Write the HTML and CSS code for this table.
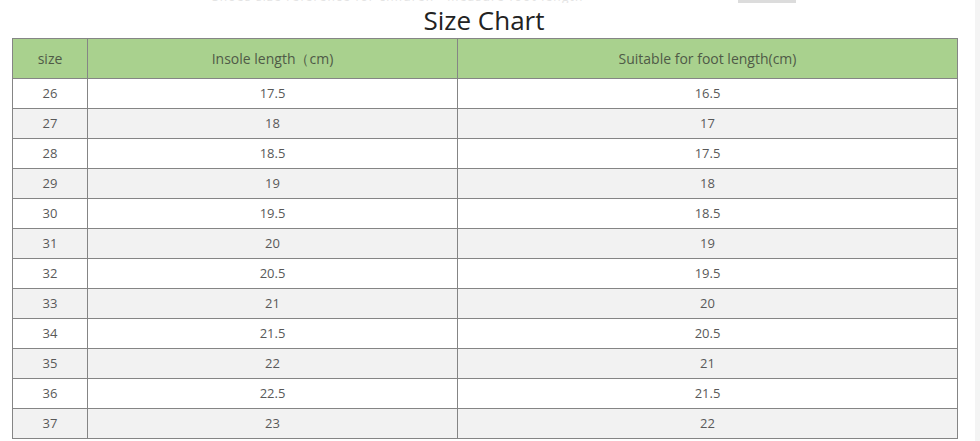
FILE: index.html
```html
<!DOCTYPE html>
<html>
<head>
<meta charset="utf-8">
<link rel="stylesheet" href="styles.css">
</head>
<body>
<div class="page">
  <div class="main">
    <div class="topstrip">
      <span class="ghost">Shoes size reference for children · measure foot length</span>
      <span class="ghostbox"></span>
    </div>
    <h1 class="title">Size Chart</h1>
    <table class="chart">
      <colgroup>
        <col class="c1"><col class="c2"><col class="c3">
      </colgroup>
      <thead>
        <tr><th>size</th><th>Insole length（cm)</th><th>Suitable for foot length(cm)</th></tr>
      </thead>
      <tbody>
        <tr><td>26</td><td>17.5</td><td>16.5</td></tr>
        <tr><td>27</td><td>18</td><td>17</td></tr>
        <tr><td>28</td><td>18.5</td><td>17.5</td></tr>
        <tr><td>29</td><td>19</td><td>18</td></tr>
        <tr><td>30</td><td>19.5</td><td>18.5</td></tr>
        <tr><td>31</td><td>20</td><td>19</td></tr>
        <tr><td>32</td><td>20.5</td><td>19.5</td></tr>
        <tr><td>33</td><td>21</td><td>20</td></tr>
        <tr><td>34</td><td>21.5</td><td>20.5</td></tr>
        <tr><td>35</td><td>22</td><td>21</td></tr>
        <tr><td>36</td><td>22.5</td><td>21.5</td></tr>
        <tr><td>37</td><td>23</td><td>22</td></tr>
      </tbody>
    </table>
  </div>
  <div class="side"></div>
</div>
</body>
</html>
```
FILE: styles.css
```css
html, body {
  margin: 0;
  padding: 0;
  background: #ffffff;
}
body {
  font-family: "Open Sans", "Noto Sans", sans-serif;
  width: 980px;
  height: 441px;
  overflow: hidden;
}
.page {
  display: flex;
  width: 980px;
  height: 441px;
}
.main {
  width: 975px;
  flex: none;
}
.side {
  flex: 1;
  background: #f4f4f4;
}
.topstrip {
  height: 3px;
  overflow: hidden;
  display: flex;
  align-items: flex-start;
}
.ghost {
  margin-left: 212px;
  margin-top: -9px;
  font-size: 12px;
  line-height: 12px;
  color: #e4e4e4;
  white-space: nowrap;
  letter-spacing: 1.2px;
}
.ghostbox {
  margin-left: auto;
  margin-right: 179px;
  width: 58px;
  height: 4px;
  background: #dcdcdc;
}
.title {
  margin: 0;
  height: 35px;
  line-height: 35px;
  font-size: 26px;
  font-weight: 400;
  color: #222222;
  text-align: center;
  width: 968px;
}
.chart {
  margin-left: 12px;
  border-collapse: collapse;
  table-layout: fixed;
  width: 945px;
  font-size: 13px;
  color: #595959;
}
.c1 { width: 75px; }
.c2 { width: 370px; }
.c3 { width: 500px; }
.chart th, .chart td {
  border: 1px solid #858585;
  text-align: center;
  padding: 0;
  font-weight: 400;
}
.chart th {
  background: #a9d18e;
  height: 39px;
  font-size: 14px;
  color: #4f5a47;
}
.chart td {
  height: 30px;
  padding-bottom: 2px;
  box-sizing: border-box;
}
.chart tbody tr:nth-child(even) td {
  background: #f2f2f2;
}
```
